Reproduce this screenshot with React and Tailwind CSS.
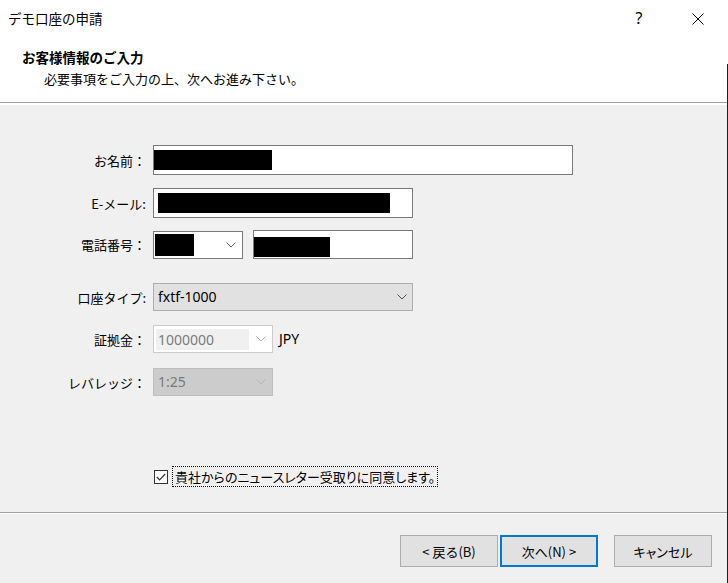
import React from "react";

function Chevron({ color = "#606060", className = "" }) {
  return (
    <svg width="10" height="6" viewBox="0 0 10 6" className={className}>
      <polyline points="0.5,0.5 5,5 9.5,0.5" fill="none" stroke={color} strokeWidth="1" />
    </svg>
  );
}

function Label({ children }) {
  return (
    <div className="w-[146px] text-right text-[13px] leading-[17px] text-black whitespace-nowrap">{children}</div>
  );
}

export default function App() {
  return (
    <div className="w-[728px] h-[583px] flex bg-[#f0f0f0] font-['Noto_Sans_CJK_JP','Noto_Sans',sans-serif] text-black overflow-hidden">
      <div className="w-[727px] flex flex-col">
        {/* Header */}
        <div className="h-[102px] bg-white flex flex-col">
          <div className="h-[37px] flex items-center pl-[8px] pr-[23px]">
            <div className="text-[13.5px] leading-[17px] flex-1">デモ口座の申請</div>
            <div className="text-[16px] leading-[17px] w-[10px] text-center mr-[48px] font-['Noto_Sans',sans-serif]">?</div>
            <svg width="12" height="12" viewBox="0 0 12 12">
              <line x1="0.5" y1="0.5" x2="11.5" y2="11.5" stroke="#000" strokeWidth="1" />
              <line x1="11.5" y1="0.5" x2="0.5" y2="11.5" stroke="#000" strokeWidth="1" />
            </svg>
          </div>
          <div className="mt-[12px] pl-[22px] text-[13.5px] leading-[17px] font-bold">お客様情報のご入力</div>
          <div className="mt-[4px] pl-[44px] text-[13px] leading-[17px]">必要事項をご入力の上、次へお進み下さい。</div>
        </div>
        <div className="h-px bg-[#a0a0a0]" />
        <div className="h-[2px] bg-white" />

        {/* Form */}
        <div className="pt-[40px] flex flex-col">
          <div className="h-[30px] flex items-center">
            <Label>お名前：</Label>
            <div className="ml-[7px] w-[420px] h-[30px] bg-white border border-[#7a7a7a] flex items-center">
              <div className="w-[118px] h-[20px] bg-black" />
            </div>
          </div>

          <div className="mt-[13px] h-[30px] flex items-center">
            <Label>E-メール:</Label>
            <div className="ml-[7px] w-[260px] h-[30px] bg-white border border-[#7a7a7a] flex items-center pl-[4px]">
              <div className="w-[232px] h-[20px] bg-black" />
            </div>
          </div>

          <div className="mt-[12px] h-[29px] flex items-center">
            <Label>電話番号：</Label>
            <div className="ml-[7px] w-[90px] h-[28px] bg-white border border-[#7a7a7a] flex items-center pl-[1px] pr-[6px]">
              <div className="w-[39px] h-[22px] bg-black" />
              <div className="flex-1" />
              <Chevron />
            </div>
            <div className="ml-[10px] w-[160px] h-[29px] bg-white border border-[#7a7a7a] flex items-end pb-[1px]">
              <div className="w-[76px] h-[20px] bg-black" />
            </div>
          </div>

          <div className="mt-[24px] h-[28px] flex items-center">
            <Label>口座タイプ:</Label>
            <div className="ml-[7px] w-[260px] h-[28px] bg-[#e1e1e1] border border-[#adadad] flex items-center pl-[4px] pr-[5px]">
              <div className="flex-1 text-[14px] leading-[18px] font-['Noto_Sans',sans-serif]">fxtf-1000</div>
              <Chevron color="#505050" />
            </div>
          </div>

          <div className="mt-[14px] h-[28px] flex items-center">
            <Label>証拠金：</Label>
            <div className="ml-[7px] w-[120px] h-[28px] bg-white border border-[#cccccc] flex items-center p-[2px] pr-[6px]">
              <div className="w-[93px] h-[21px] bg-[#f0f0f0] text-[14px] leading-[21px] text-[#7a7a7a] pl-[2px] font-['Noto_Sans',sans-serif]">1000000</div>
              <div className="flex-1" />
              <Chevron color="#b4b4b4" />
            </div>
            <div className="ml-[6px] text-[14px] leading-[18px] font-['Noto_Sans',sans-serif]">JPY</div>
          </div>

          <div className="mt-[15px] h-[28px] flex items-center">
            <Label>レバレッジ：</Label>
            <div className="ml-[7px] w-[120px] h-[28px] bg-[#cccccc] border border-[#bfbfbf] flex items-center pl-[4px] pr-[6px]">
              <div className="flex-1 text-[14px] leading-[18px] text-[#7a7a7a] font-['Noto_Sans',sans-serif]">1:25</div>
              <Chevron color="#b4b4b4" />
            </div>
          </div>

          <div className="mt-[70px] h-[21px] flex items-center pl-[154px]">
            <div className="w-[14px] h-[14px] bg-white border border-[#333333] flex items-center justify-center">
              <svg width="10" height="8" viewBox="0 0 10 8">
                <polyline points="0.8,4 3.6,6.8 9.2,1" fill="none" stroke="#333" strokeWidth="1.2" />
              </svg>
            </div>
            <div className="ml-[4px] h-[21px] border border-dotted border-black flex items-center px-[2px] text-[13px] leading-[17px] [font-feature-settings:'palt']">
              貴社からのニュースレター受取りに同意します。
            </div>
          </div>
        </div>

        <div className="mt-[25px] h-px bg-[#a0a0a0]" />
        <div className="h-px bg-white" />

        <div className="mt-[21px] flex justify-end pr-[15px]">
          <button className="w-[98px] h-[32px] bg-[#e1e1e1] border border-[#adadad] text-[13px] leading-[17px]">&lt; 戻る(B)</button>
          <button className="ml-[2px] w-[98px] h-[32px] bg-[#e1e1e1] border-2 border-[#0078d7] text-[13px] leading-[17px]">次へ(N) &gt;</button>
          <button className="ml-[16px] w-[98px] h-[32px] bg-[#e1e1e1] border border-[#adadad] text-[13px] leading-[17px] [font-feature-settings:'palt']">キャンセル</button>
        </div>
      </div>
      <div className="w-px flex flex-col">
        <div className="h-[64px] bg-white" />
        <div className="flex-1 bg-[#1e1e1e]" />
      </div>
    </div>
  );
}
